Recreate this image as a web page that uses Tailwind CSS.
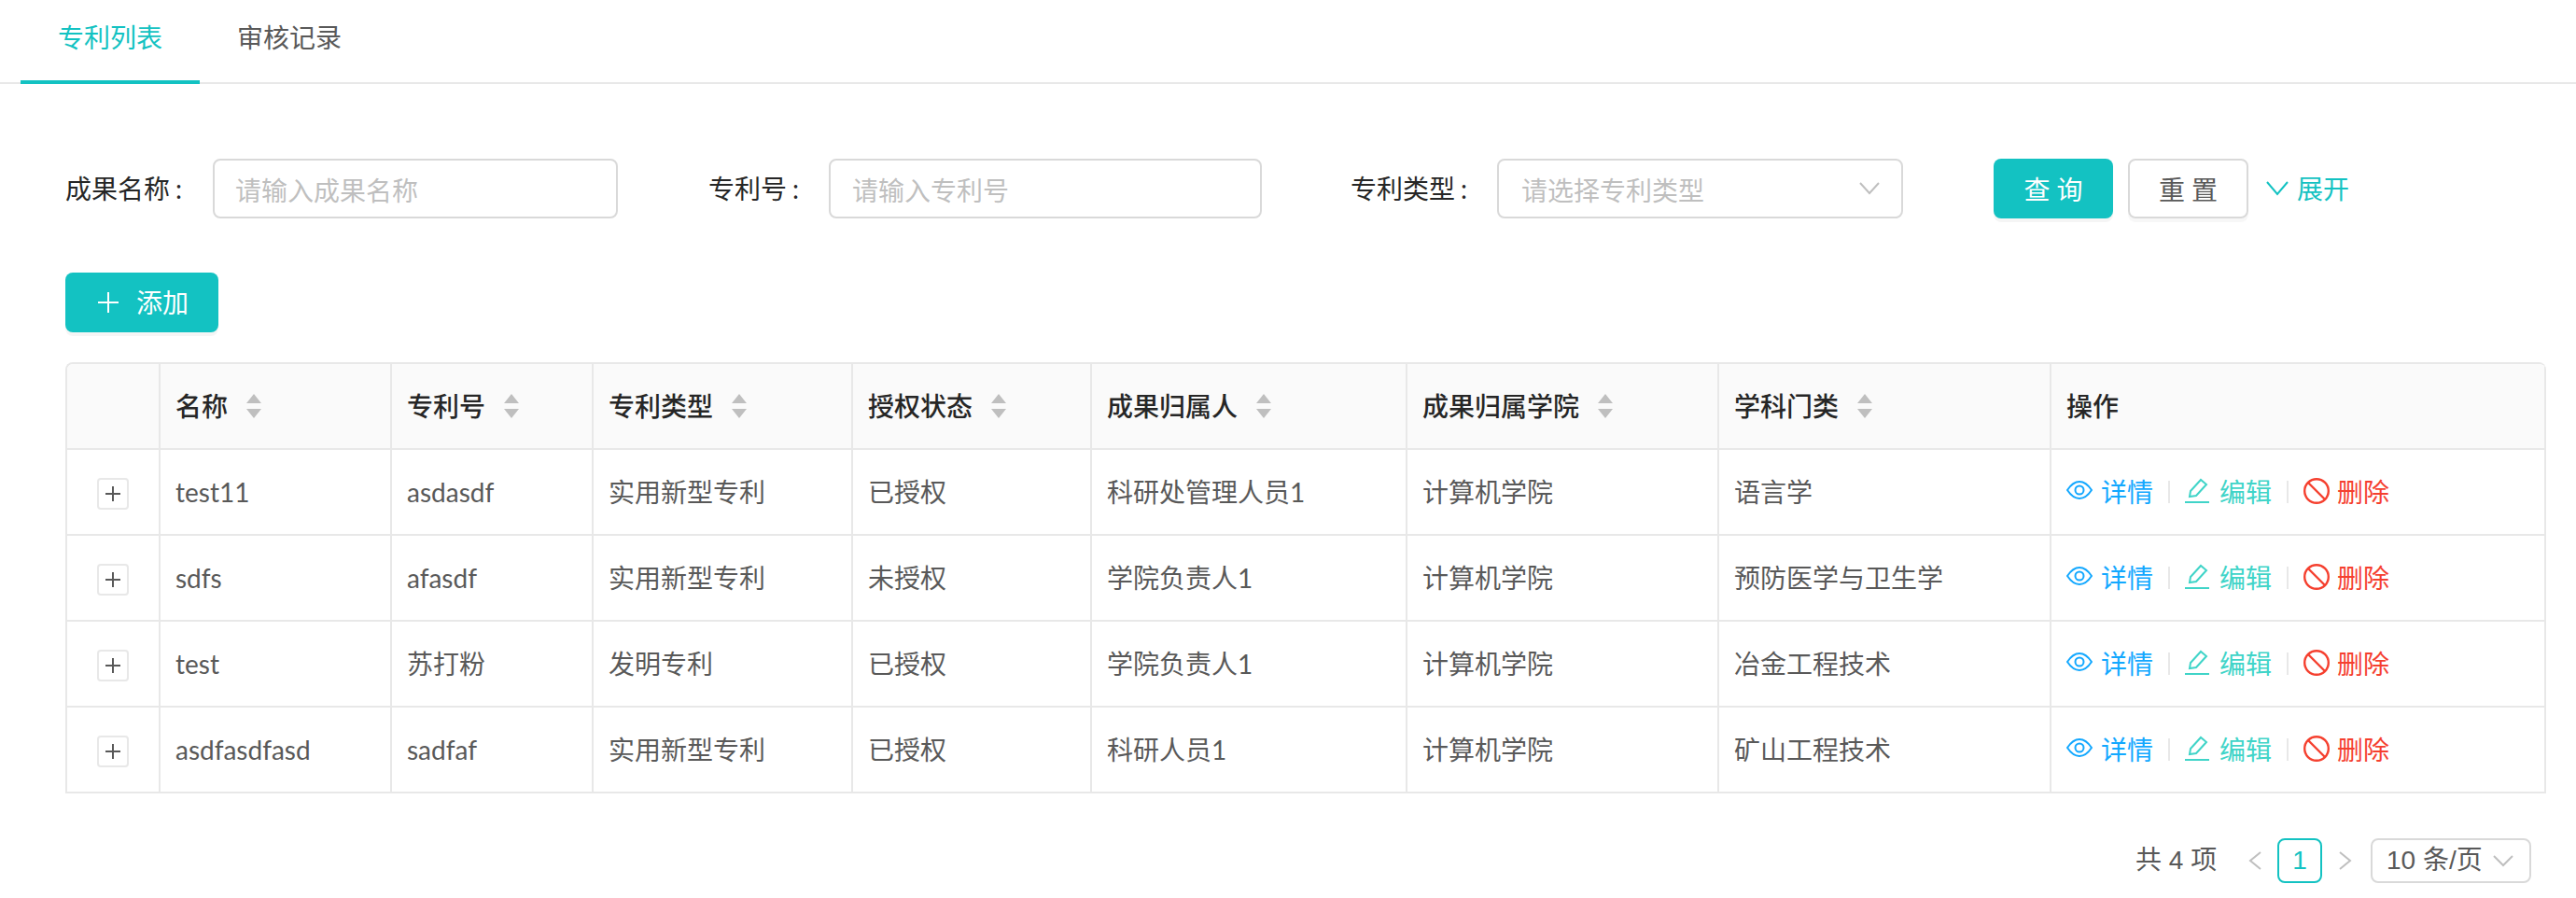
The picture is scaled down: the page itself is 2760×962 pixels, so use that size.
<!DOCTYPE html>
<html lang="zh-CN">
<head>
    <meta charset="UTF-8">
    <title>专利列表</title>
    <script src="https://cdn.jsdelivr.net/npm/@tailwindcss/browser@4"></script>
</head>
<body class="bg-white h-[962px] overflow-hidden text-[28px] leading-[44px] text-[#595959] font-['Lato','Noto_Sans_CJK_SC',sans-serif]">
    <!-- Tabs -->
    <div class="h-[90px] border-b-2 border-[#e8e8e8] pl-[22px] flex">
        <div class="w-[192px] h-[90px] pt-[18px] text-center text-[#13c2c2] border-b-4 border-[#13c2c2]">专利列表</div>
        <div class="w-[192px] h-[90px] pt-[18px] text-center">审核记录</div>
    </div>

    <!-- Search -->
    <div class="mt-[80px] pl-[70px] flex items-center h-16">
        <label class="w-[158px] text-[#262626]">成果名称<span class="ml-[6px]">:</span></label>
        <div class="w-[434px] h-16 border-2 border-[#d9d9d9] rounded-lg pl-[22px] pt-1 flex items-center text-[#bfbfbf]">请输入成果名称</div>
        <label class="ml-[97px] w-[129px] text-[#262626]">专利号<span class="ml-[6px]">:</span></label>
        <div class="w-[464px] h-16 border-2 border-[#d9d9d9] rounded-lg pl-[23px] pt-1 flex items-center text-[#bfbfbf]">请输入专利号</div>
        <label class="ml-[95px] w-[157px] text-[#262626]">专利类型<span class="ml-[6px]">:</span></label>
        <div class="w-[435px] h-16 border-2 border-[#d9d9d9] rounded-lg pl-[24px] pr-[23px] pt-1 flex items-center justify-between text-[#bfbfbf]">
            请选择专利类型
            <svg class="w-[22px] h-[14px] -mt-1" viewBox="0 0 22 14" fill="none" stroke="#bfbfbf" stroke-width="2"><path d="M1 1l10 11L21 1"/></svg>
        </div>
        <button class="ml-[97px] w-[128px] h-16 pl-[7px] pt-[2px] rounded-lg bg-[#13c2c2] text-white tracking-[7px] shadow-[0_4px_0_rgba(0,0,0,0.04)]">查询</button>
        <button class="ml-4 w-[129px] h-16 pl-[7px] pt-[2px] rounded-lg border-2 border-[#d9d9d9] tracking-[7px] shadow-[0_4px_0_rgba(0,0,0,0.03)]">重置</button>
        <div class="ml-[19px] flex items-center text-[#13c2c2]">
            <svg class="w-[24px] h-[16px] mr-[9px]" viewBox="0 0 24 16" fill="none" stroke="#13c2c2" stroke-width="2"><path d="M1 1l11 13L23 1"/></svg>
            展开
        </div>
    </div>

    <!-- Add -->
    <div class="mt-[58px] pl-[70px]">
        <button class="w-[164px] h-16 rounded-lg bg-[#13c2c2] text-white flex items-center pl-[35px] shadow-[0_4px_0_rgba(0,0,0,0.04)]">
            <svg class="w-[22px] h-[22px] mr-[19px]" viewBox="0 0 22 22" stroke="#fff" stroke-width="2"><path d="M11 0v22M0 11h22"/></svg>
            添加
        </button>
    </div>

    <!-- Table -->
    <div class="mt-8 ml-[70px] w-[2658px] rounded-t-lg border-t-2 border-l-2 border-[#e8e8e8] overflow-hidden">
        <table class="w-[2656px] table-fixed border-separate border-spacing-0">
            <colgroup>
                <col class="w-[100px]"><col class="w-[248px]"><col class="w-[216px]"><col class="w-[278px]"><col class="w-[256px]"><col class="w-[338px]"><col class="w-[334px]"><col class="w-[356px]"><col class="w-[530px]">
            </colgroup>
            <thead>
                <tr class="h-[92px] bg-[#fafafa] text-[#262626] text-left">
                    <th class="border-r-2 border-b-2 border-[#e8e8e8]"></th>
                    <th class="pl-4 font-medium border-r-2 border-b-2 border-[#e8e8e8]"><div class="flex items-center">名称<svg class="ml-5 w-4 h-[26px]" viewBox="0 0 16 26" fill="#bfbfbf"><path d="M8 0l8 10H0zM0 16h16l-8 10z"/></svg></div></th>
                    <th class="pl-4 font-medium border-r-2 border-b-2 border-[#e8e8e8]"><div class="flex items-center">专利号<svg class="ml-5 w-4 h-[26px]" viewBox="0 0 16 26" fill="#bfbfbf"><path d="M8 0l8 10H0zM0 16h16l-8 10z"/></svg></div></th>
                    <th class="pl-4 font-medium border-r-2 border-b-2 border-[#e8e8e8]"><div class="flex items-center">专利类型<svg class="ml-5 w-4 h-[26px]" viewBox="0 0 16 26" fill="#bfbfbf"><path d="M8 0l8 10H0zM0 16h16l-8 10z"/></svg></div></th>
                    <th class="pl-4 font-medium border-r-2 border-b-2 border-[#e8e8e8]"><div class="flex items-center">授权状态<svg class="ml-5 w-4 h-[26px]" viewBox="0 0 16 26" fill="#bfbfbf"><path d="M8 0l8 10H0zM0 16h16l-8 10z"/></svg></div></th>
                    <th class="pl-4 font-medium border-r-2 border-b-2 border-[#e8e8e8]"><div class="flex items-center">成果归属人<svg class="ml-5 w-4 h-[26px]" viewBox="0 0 16 26" fill="#bfbfbf"><path d="M8 0l8 10H0zM0 16h16l-8 10z"/></svg></div></th>
                    <th class="pl-4 font-medium border-r-2 border-b-2 border-[#e8e8e8]"><div class="flex items-center">成果归属学院<svg class="ml-5 w-4 h-[26px]" viewBox="0 0 16 26" fill="#bfbfbf"><path d="M8 0l8 10H0zM0 16h16l-8 10z"/></svg></div></th>
                    <th class="pl-4 font-medium border-r-2 border-b-2 border-[#e8e8e8]"><div class="flex items-center">学科门类<svg class="ml-5 w-4 h-[26px]" viewBox="0 0 16 26" fill="#bfbfbf"><path d="M8 0l8 10H0zM0 16h16l-8 10z"/></svg></div></th>
                    <th class="pl-4 font-medium border-r-2 border-b-2 border-[#e8e8e8]">操作</th>
                </tr>
            </thead>
            <tbody id="rows"></tbody>
        </table>
    </div>

    <!-- Pagination -->
    <div class="mt-[48px] ml-[2288px] flex items-center h-12 font-['Liberation_Sans','Noto_Sans_CJK_SC',sans-serif]">
        <span class="w-[121px]">共 4 项</span>
        <svg class="w-[14px] h-[20px]" viewBox="0 0 14 20" fill="none" stroke="#bfbfbf" stroke-width="2"><path d="M13 1L2 10l11 9"/></svg>
        <div class="ml-[17px] w-12 h-12 rounded-lg border-2 border-[#13c2c2] text-[#13c2c2] flex items-center justify-center">1</div>
        <svg class="ml-[18px] w-[14px] h-[20px]" viewBox="0 0 14 20" fill="none" stroke="#bfbfbf" stroke-width="2"><path d="M1 1l11 9-11 9"/></svg>
        <div class="ml-[20px] w-[172px] h-12 rounded-lg border-2 border-[#d9d9d9] pl-[15px] flex items-center">
            10 条/页
            <svg class="ml-[11px] w-[22px] h-[13px]" viewBox="0 0 22 13" fill="none" stroke="#bfbfbf" stroke-width="2"><path d="M1 1l10 10L21 1"/></svg>
        </div>
    </div>

    <script>
        const patents = [
            ['test11', 'asdasdf', '实用新型专利', '已授权', '科研处管理人员1', '计算机学院', '语言学'],
            ['sdfs', 'afasdf', '实用新型专利', '未授权', '学院负责人1', '计算机学院', '预防医学与卫生学'],
            ['test', '苏打粉', '发明专利', '已授权', '学院负责人1', '计算机学院', '冶金工程技术'],
            ['asdfasdfasd', 'sadfaf', '实用新型专利', '已授权', '科研人员1', '计算机学院', '矿山工程技术']
        ];

        document.getElementById('rows').innerHTML = patents.map(row => `
            <tr class="h-[92px]">
                <td class="border-r-2 border-b-2 border-[#e8e8e8]">
                    <div class="mt-1 mx-auto w-[34px] h-[34px] rounded border-2 border-[#e8e8e8] flex items-center justify-center">
                        <svg class="w-[16px] h-[16px]" viewBox="0 0 16 16" stroke="#595959" stroke-width="2"><path d="M8 0v16M0 8h16"/></svg>
                    </div>
                </td>
                ${row.map(text => `<td class="pl-4 border-r-2 border-b-2 border-[#e8e8e8]">${text}</td>`).join('')}
                <td class="pl-4 border-r-2 border-b-2 border-[#e8e8e8]">
                    <div class="flex items-center">
                        <span class="flex items-center text-[#13a8ff]">
                            <svg class="w-[28px] h-[20px] mr-[9px] -mt-1" viewBox="0 0 28 20" fill="none" stroke="#13a8ff" stroke-width="2"><path d="M1 10C5 4 9 1 14 1s9 3 13 9c-4 6-8 9-13 9S5 16 1 10z"/><circle cx="14" cy="10" r="4.5"/></svg>
                            详情
                        </span>
                        <span class="mx-[16px] w-[2px] h-6 bg-[#e8e8e8]"></span>
                        <span class="flex items-center text-[#40d4c8]">
                            <svg class="w-[26px] h-[28px] mr-[11px] -mt-[2px]" viewBox="0 0 26 28" fill="none" stroke="#40d4c8" stroke-width="2"><path d="M5 20l1-6L17 2l6 5-11 12z"/><path d="M0 26h26"/></svg>
                            编辑
                        </span>
                        <span class="mx-[16px] w-[2px] h-6 bg-[#e8e8e8]"></span>
                        <span class="flex items-center text-[#f5402f]">
                            <svg class="w-[28px] h-[28px] mr-[8px] -mt-[2px]" viewBox="0 0 28 28" fill="none" stroke="#f5402f" stroke-width="2.4"><circle cx="14" cy="14" r="12.8"/><path d="M5 5l18 18"/></svg>
                            删除
                        </span>
                    </div>
                </td>
            </tr>`).join('');
    </script>
</body>
</html>
